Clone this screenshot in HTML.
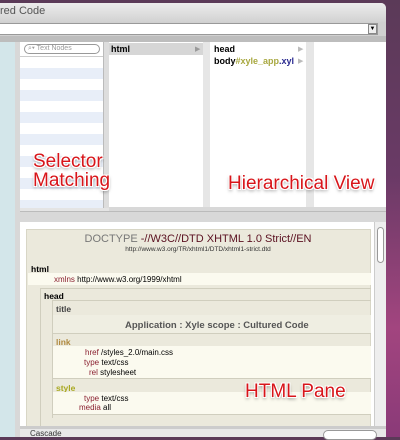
<!DOCTYPE html>
<html><head><meta charset="utf-8"><style>
*{margin:0;padding:0;box-sizing:border-box}
body{width:400px;height:437px;overflow:hidden;position:relative;font-family:"Liberation Sans",sans-serif;background:linear-gradient(180deg,#5b3a58 0%,#6a3a66 40%,#a2457f 75%,#8a3a78 100%)}
.a{position:absolute}
.lbl{position:absolute;color:#d8151a;font-size:19px;line-height:19px;text-shadow:-1px -1px 0 #fff,1px -1px 0 #fff,-1px 1px 0 #fff,1px 1px 0 #fff,0 2px 3px rgba(0,0,0,.5);letter-spacing:0px}
.t{position:absolute;font-size:8px;white-space:nowrap}
.m{color:#8a2030}
</style></head><body>
<div class="a" style="left:0;top:3px;width:386px;height:434px;background:#e4e4e4;border-radius:0 5px 0 0"></div>
<div class="a" style="left:0;top:3px;width:386px;height:19px;background:linear-gradient(#ececec,#d2d2d2);border-radius:0 5px 0 0"></div>
<div class="t" style="left:0;top:5px;font-size:11px;color:#555">red Code</div>
<div class="a" style="left:0;top:22px;width:386px;height:14px;background:#d0d0d0"></div>
<div class="a" style="left:0;top:23px;width:378px;height:12px;background:#fff;border:1px solid #999;border-left:none"></div>
<div class="a" style="left:368px;top:24px;width:9px;height:10px;background:#eee;border:1px solid #888;font-size:6px;text-align:center;line-height:8px">▼</div>
<div class="a" style="left:0;top:36px;width:386px;height:6px;background:#bdbdbd"></div>
<div class="a" style="left:0;top:42px;width:15px;height:395px;background:#d3e6ea"></div>
<div class="a" style="left:15px;top:42px;width:5px;height:395px;background:#d8d8d8"></div>
<div class="a" style="left:20px;top:42px;width:83px;height:166px;background:repeating-linear-gradient(180deg,#fff 0 11px,#e8eef8 11px 22px);background-position:0 15px"></div>
<div class="a" style="left:20px;top:42px;width:83px;height:15px;background:#fff;border-bottom:1px solid #ccc"></div>
<div class="a" style="left:24px;top:44px;width:76px;height:10px;border:1px solid #999;border-radius:6px;background:#fff"></div>
<div class="t" style="left:28px;top:45px;font-size:7px;color:#999">⌕▾ Text Nodes</div>
<div class="a" style="left:103px;top:42px;width:6px;height:166px;background:#ddd;border-left:1px solid #bbb"></div>
<div class="a" style="left:109px;top:42px;width:94px;height:166px;background:#fff"></div>
<div class="a" style="left:109px;top:43px;width:94px;height:12px;background:#d6d6d6"></div>
<div class="t" style="left:111px;top:44px;font-size:9px;font-weight:bold">html</div>
<div class="t" style="left:195px;top:45px;color:#999;font-size:7px">▶</div>
<div class="a" style="left:203px;top:42px;width:7px;height:166px;background:#e6e6e6"></div>
<div class="a" style="left:210px;top:42px;width:96px;height:166px;background:#fff"></div>
<div class="t" style="left:214px;top:44px;font-size:9px;font-weight:bold">head</div>
<div class="t" style="left:214px;top:56px;font-size:9px;font-weight:bold">body<span style="color:#a8a840">#xyle_app</span><span style="color:#2a2a90">.xyl</span></div>
<div class="t" style="left:298px;top:45px;color:#bbb;font-size:7px">▶</div>
<div class="t" style="left:298px;top:57px;color:#bbb;font-size:7px">▶</div>
<div class="a" style="left:306px;top:42px;width:8px;height:166px;background:#e6e6e6"></div>
<div class="a" style="left:314px;top:42px;width:72px;height:166px;background:#fff"></div>
<div class="a" style="left:109px;top:207px;width:277px;height:4px;background:#d8d8d8"></div>
<div class="a" style="left:20px;top:211px;width:366px;height:11px;background:#d8d8d8;border-top:1px solid #bbb"></div>
<div class="lbl" style="left:33px;top:152px">Selector<br>Matching</div>
<div class="lbl" style="left:228px;top:174px">Hierarchical View</div>
<div class="a" style="left:20px;top:222px;width:354px;height:206px;background:#fff"></div>
<div class="a" style="left:26px;top:229px;width:345px;height:199px;background:#ebe9dc;border:1px solid #d8d6c6"></div>
<div class="t" style="left:0;width:400px;text-align:center;top:233px;font-size:11px;color:#5a1020;padding-right:4px"><span style="color:#777">DOCTYPE</span> -//W3C//DTD XHTML 1.0 Strict//EN</div>
<div class="t" style="left:0;width:400px;text-align:center;top:246px;font-size:6.5px;color:#333;padding-right:4px">http://www.w3.org/TR/xhtml1/DTD/xhtml1-strict.dtd</div>
<div class="t" style="left:31px;top:264px;font-weight:bold;font-size:8.5px">html</div>
<div class="a" style="left:28px;top:273px;width:343px;height:12px;background:#fbfaef"></div>
<div class="t" style="left:54px;top:275px"><span class="m">xmlns</span> http://www.w3.org/1999/xhtml</div>
<div class="a" style="left:40px;top:288px;width:331px;height:140px;border-left:1px solid #d0cebe;border-top:1px solid #d0cebe"></div>
<div class="t" style="left:44px;top:291px;font-weight:bold;font-size:8.5px">head</div>
<div class="a" style="left:52px;top:300px;width:319px;height:118px;border-left:1px solid #d0cebe;border-top:1px solid #d0cebe"></div>
<div class="t" style="left:56px;top:304px;font-weight:bold;font-size:8.5px;color:#444">title</div>
<div class="a" style="left:53px;top:315px;width:318px;height:18px;background:#efeee2"></div>
<div class="t" style="left:125px;top:320px;font-weight:bold;font-size:9.5px;color:#555">Application : Xyle scope : Cultured Code</div>
<div class="a" style="left:53px;top:333px;width:318px;height:1px;background:#d0cebe"></div>
<div class="t" style="left:56px;top:337px;font-weight:bold;font-size:8.5px;color:#b08a40">link</div>
<div class="a" style="left:53px;top:346px;width:318px;height:32px;background:#fbfaef"></div>
<div class="t" style="left:85px;top:348px"><span class="m">href</span> /styles_2.0/main.css</div>
<div class="t" style="left:84px;top:358px"><span class="m">type</span> text/css</div>
<div class="t" style="left:89px;top:368px"><span class="m">rel</span> stylesheet</div>
<div class="a" style="left:53px;top:378px;width:318px;height:1px;background:#d0cebe"></div>
<div class="t" style="left:56px;top:383px;font-weight:bold;font-size:8.5px;color:#a8a820">style</div>
<div class="a" style="left:53px;top:392px;width:318px;height:22px;background:#fbfaef"></div>
<div class="t" style="left:84px;top:394px"><span class="m">type</span> text/css</div>
<div class="t" style="left:79px;top:403px"><span class="m">media</span> all</div>
<div class="a" style="left:53px;top:414px;width:318px;height:1px;background:#d0cebe"></div>
<div class="lbl" style="left:245px;top:382px">HTML Pane</div>
<div class="a" style="left:374px;top:222px;width:12px;height:206px;background:#eee;border-left:1px solid #ccc"></div>
<div class="a" style="left:377px;top:227px;width:7px;height:36px;background:#fff;border:1px solid #999;border-radius:4px"></div>
<div class="a" style="left:20px;top:426px;width:366px;height:3px;background:#ccc"></div>
<div class="a" style="left:20px;top:429px;width:366px;height:8px;background:#e8e8e8"></div>
<div class="t" style="left:30px;top:429px;font-size:8px;color:#333">Cascade</div>
<div class="a" style="left:323px;top:430px;width:54px;height:10px;border:1px solid #999;border-radius:5px;background:#fff"></div>
</body></html>
